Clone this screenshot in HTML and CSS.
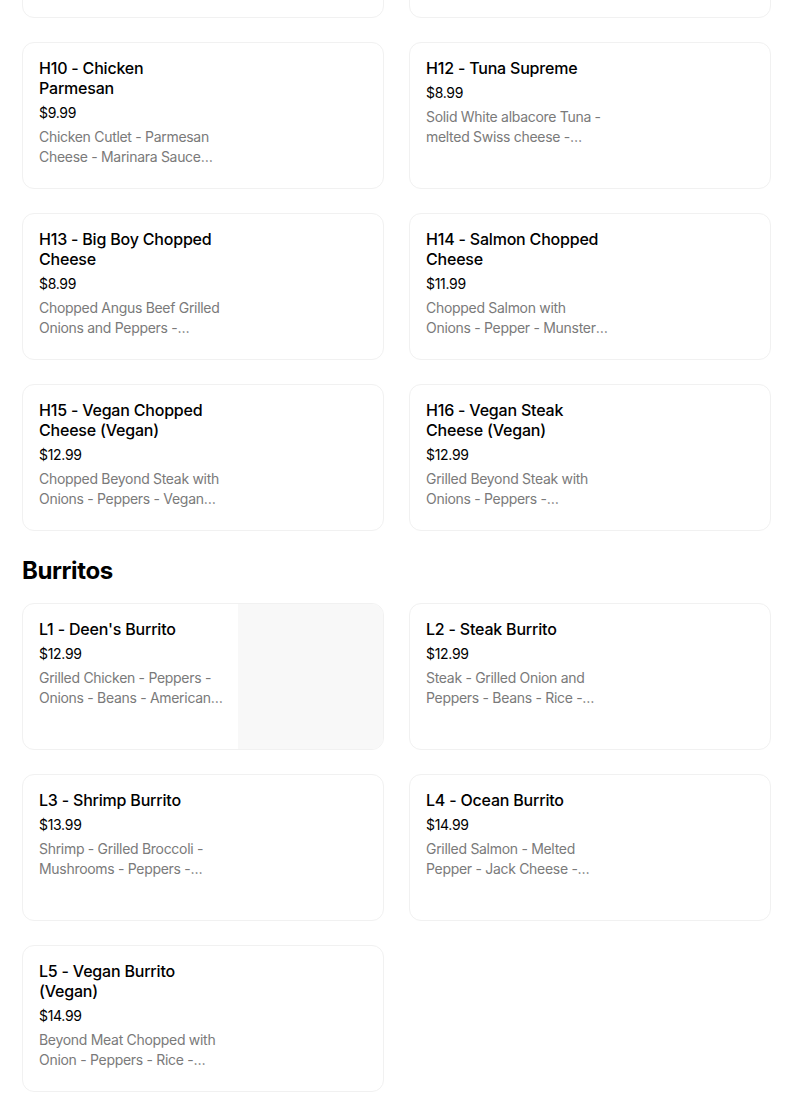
FILE: index.html
```html
<!DOCTYPE html>
<html>
<head>
<meta charset="utf-8">
<link rel="stylesheet" href="styles.css">
</head>
<body>
<div class="page">
  <section class="section">
    <div class="grid">
      <div class="card"></div>
      <div class="card"></div>
      <div class="card"><div class="info"><div class="title">H10 - Chicken Parmesan</div><div class="price">$9.99</div><div class="desc">Chicken Cutlet - Parmesan Cheese - Marinara Sauce Mozzarella - Toasted Hero</div></div><div class="thumb"></div></div>
      <div class="card"><div class="info"><div class="title">H12 - Tuna Supreme</div><div class="price">$8.99</div><div class="desc">Solid White albacore Tuna - melted Swiss cheese - lettuce - tomato</div></div><div class="thumb"></div></div>
      <div class="card"><div class="info"><div class="title">H13 - Big Boy Chopped Cheese</div><div class="price">$8.99</div><div class="desc">Chopped Angus Beef Grilled Onions and Peppers - American Cheese</div></div><div class="thumb"></div></div>
      <div class="card"><div class="info"><div class="title">H14 - Salmon Chopped Cheese</div><div class="price">$11.99</div><div class="desc">Chopped Salmon with Onions - Pepper - Munster Cheese</div></div><div class="thumb"></div></div>
      <div class="card"><div class="info"><div class="title">H15 - Vegan Chopped Cheese (Vegan)</div><div class="price">$12.99</div><div class="desc">Chopped Beyond Steak with Onions - Peppers - Vegan Cheese</div></div><div class="thumb"></div></div>
      <div class="card"><div class="info"><div class="title">H16 - Vegan Steak Cheese (Vegan)</div><div class="price">$12.99</div><div class="desc">Grilled Beyond Steak with Onions - Peppers - Mushrooms - Vegan Cheese</div></div><div class="thumb"></div></div>
    </div>
  </section>
  <section class="section">
    <h2 class="heading">Burritos</h2>
    <div class="grid">
      <div class="card"><div class="info"><div class="title">L1 - Deen's Burrito</div><div class="price">$12.99</div><div class="desc">Grilled Chicken - Peppers - Onions - Beans - American Cheese - Rice</div></div><div class="thumb filled"></div></div>
      <div class="card"><div class="info"><div class="title">L2 - Steak Burrito</div><div class="price">$12.99</div><div class="desc">Steak - Grilled Onion and Peppers - Beans - Rice - Cheese</div></div><div class="thumb"></div></div>
      <div class="card"><div class="info"><div class="title">L3 - Shrimp Burrito</div><div class="price">$13.99</div><div class="desc">Shrimp - Grilled Broccoli - Mushrooms - Peppers - Onions - Rice</div></div><div class="thumb"></div></div>
      <div class="card"><div class="info"><div class="title">L4 - Ocean Burrito</div><div class="price">$14.99</div><div class="desc">Grilled Salmon - Melted Pepper - Jack Cheese - Avocado - Rice</div></div><div class="thumb"></div></div>
      <div class="card"><div class="info"><div class="title">L5 - Vegan Burrito (Vegan)</div><div class="price">$14.99</div><div class="desc">Beyond Meat Chopped with Onion - Peppers - Rice - Vegan Cheese</div></div><div class="thumb"></div></div>
    </div>
  </section>
</div>
</body>
</html>
```

FILE: styles.css
```css
html, body {
  margin: 0;
  padding: 0;
  background: #ffffff;
}
body {
  font-family: Inter, "Noto Sans", "Liberation Sans", sans-serif;
  color: #000;
}
.page {
  margin-top: -129px;
  padding: 0 33px 0 22px;
}
.grid {
  display: grid;
  grid-template-columns: 1fr 1fr;
  column-gap: 25px;
  row-gap: 24px;
}
.card {
  display: flex;
  height: 147px;
  box-sizing: border-box;
  border: 1px solid #f1f1f1;
  border-radius: 12px;
  overflow: hidden;
  background: #fff;
}
.info {
  flex: 1;
  min-width: 0;
  padding: 15px 14px 16px 16px;
}
.thumb {
  width: 145px;
  flex-shrink: 0;
}
.thumb.filled {
  background: #f8f8f8;
}
.title {
  margin-right: 4px;
  font-size: 16px;
  line-height: 20px;
  font-weight: 500;
  letter-spacing: -0.2px;
}
.price {
  margin-top: 5px;
  font-size: 14px;
  line-height: 20px;
  letter-spacing: -0.3px;
}
.desc {
  margin-top: 4px;
  font-size: 14px;
  line-height: 20px;
  color: #7a7a7a;
  letter-spacing: -0.3px;
  display: -webkit-box;
  -webkit-line-clamp: 2;
  -webkit-box-orient: vertical;
  overflow: hidden;
}
.heading {
  margin: 24px 0 16px;
  font-size: 24px;
  line-height: 32px;
  font-weight: 700;
  letter-spacing: -0.4px;
}
```
